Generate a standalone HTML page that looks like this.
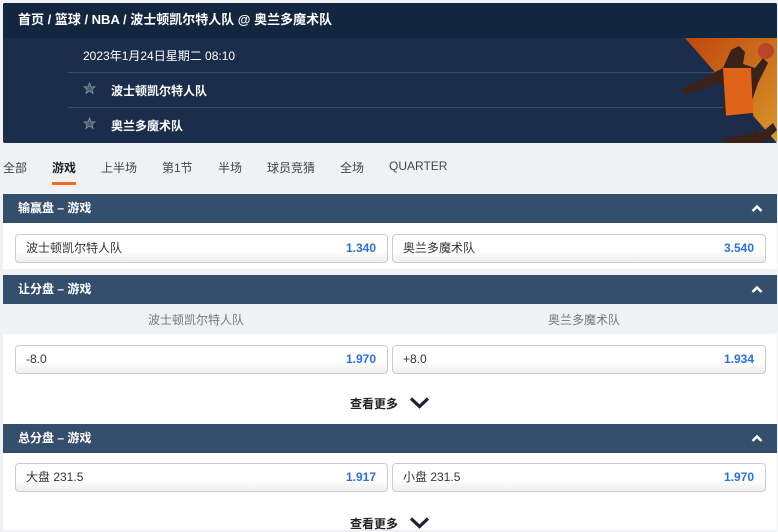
<!DOCTYPE html>
<html><head><meta charset="utf-8"><style>
*{box-sizing:border-box;margin:0;padding:0}
body{width:778px;height:530px;overflow:hidden;background:#eff1f5;font-family:"Liberation Sans","Noto Sans CJK SC",sans-serif;font-size:12px;color:#222;position:relative}
.abs{position:absolute}
.hdr{left:3px;top:3px;width:774px;height:140px;background:#1a2d4a;border-radius:2px;overflow:hidden}
.top{left:0;top:0;width:774px;height:35px;background:#13263f;color:#fff;font-weight:bold;font-size:13px;line-height:33px;padding-left:15px}
.line{height:1px;background:#3a4d68;left:65px;width:709px}
.wt{color:#fff;font-weight:bold;font-size:12px}
.tabs span{position:absolute;top:159px;font-size:12px;color:#444}
.sh{left:3px;width:774px;height:29px;background:#344f6b;color:#fff;font-weight:bold;font-size:12px;line-height:29px;padding-left:15px}
.sh svg{position:absolute;right:14px;top:10px}
.wb{left:3px;width:774px;background:#fff}
.btn{position:absolute;height:29px;border:1px solid #ccc;border-radius:4px;background:linear-gradient(#fff 60%,#eee);line-height:27px;padding:0 10px;font-size:12px;color:#333}
.btn b{position:absolute;right:11px;top:0;color:#2a6fe0;font-weight:bold}
.more{font-weight:bold;font-size:12px;color:#222}
</style></head><body>
<div class="abs hdr">
<div class="abs top">首页 / 篮球 / NBA / 波士顿凯尔特人队 @ 奥兰多魔术队</div>
<div class="abs" style="left:80px;top:44px;color:#fff;font-size:12px">2023年1月24日星期二 08:10</div>
<div class="abs line" style="top:69px"></div>
<div class="abs line" style="top:104px"></div>
<svg class="abs" style="left:80px;top:79px" width="13" height="13" viewBox="0 0 24 24"><path d="M12 2l3 7h7l-5.5 4.5 2 7.5L12 16.5 5.5 21l2-7.5L2 9h7z" fill="#4a5a70" stroke="#8a95a5" stroke-width="1.5"/></svg>
<div class="abs wt" style="left:108px;top:79px">波士顿凯尔特人队</div>
<svg class="abs" style="left:80px;top:114px" width="13" height="13" viewBox="0 0 24 24"><path d="M12 2l3 7h7l-5.5 4.5 2 7.5L12 16.5 5.5 21l2-7.5L2 9h7z" fill="#4a5a70" stroke="#8a95a5" stroke-width="1.5"/></svg>
<div class="abs wt" style="left:108px;top:114px">奥兰多魔术队</div>
<svg class="abs" style="left:620px;top:35px" width="154" height="105">
<defs><linearGradient id="g" x1="0" y1="0" x2="1" y2="1"><stop offset="0" stop-color="#c0460e"/><stop offset="1" stop-color="#d8962a"/></linearGradient></defs>
<polygon points="62,0 154,0 154,105" fill="url(#g)"/>
<path d="M58,52 L100,30 L108,12 L116,8 L122,14 L120,26 L132,30 L140,20 L145,25 L135,45 L130,60 L120,80 L138,95 L150,85 L154,92 L140,105 L100,105 L105,90 L100,70 L105,50 L95,45 L62,57 Z" fill="#3a2218"/>
<path d="M100,30 L128,30 L130,75 L103,78 Z" fill="#e0631a"/>
<path d="M100,78 L130,75 L132,95 L102,100 Z" fill="#1c2c48"/>
<circle cx="143" cy="13" r="8" fill="#b9452a"/>
</svg>
</div>
<div class="tabs">
<span style="left:3px">全部</span>
<span style="left:52px;font-weight:bold;color:#222">游戏</span>
<span style="left:101px">上半场</span>
<span style="left:162px">第1节</span>
<span style="left:218px">半场</span>
<span style="left:267px">球员竞猜</span>
<span style="left:340px">全场</span>
<span style="left:389px">QUARTER</span>
</div>
<div class="abs" style="left:52px;top:182px;width:24px;height:3px;background:#f26a1b"></div>

<div class="abs sh" style="top:194px">输赢盘 – 游戏<svg width="12" height="9" viewBox="0 0 12 9"><path d="M1.5 7L6 2.5 10.5 7" fill="none" stroke="#fff" stroke-width="2.5"/></svg></div>
<div class="abs wb" style="top:223px;height:46px"></div>
<div class="btn" style="left:15px;top:234px;width:373px">波士顿凯尔特人队<b>1.340</b></div>
<div class="btn" style="left:392px;top:234px;width:374px">奥兰多魔术队<b>3.540</b></div>

<div class="abs sh" style="top:275px">让分盘 – 游戏<svg width="12" height="9" viewBox="0 0 12 9"><path d="M1.5 7L6 2.5 10.5 7" fill="none" stroke="#fff" stroke-width="2.5"/></svg></div>
<div class="abs" style="left:148px;top:311px;color:#777">波士顿凯尔特人队</div>
<div class="abs" style="left:548px;top:311px;color:#777">奥兰多魔术队</div>
<div class="abs wb" style="top:334px;height:90px"></div>
<div class="btn" style="left:15px;top:345px;width:373px">-8.0<b>1.970</b></div>
<div class="btn" style="left:392px;top:345px;width:374px">+8.0<b>1.934</b></div>
<div class="abs more" style="left:350px;top:395px">查看更多</div>
<svg class="abs" style="left:409px;top:396px" width="21" height="14" viewBox="0 0 21 14"><path d="M2 2.5L10.5 10.5 19 2.5" fill="none" stroke="#1a2233" stroke-width="3.2"/></svg>

<div class="abs sh" style="top:424px">总分盘 – 游戏<svg width="12" height="9" viewBox="0 0 12 9"><path d="M1.5 7L6 2.5 10.5 7" fill="none" stroke="#fff" stroke-width="2.5"/></svg></div>
<div class="abs wb" style="top:453px;height:77px"></div>
<div class="btn" style="left:15px;top:463px;width:373px">大盘 231.5<b>1.917</b></div>
<div class="btn" style="left:392px;top:463px;width:374px">小盘 231.5<b>1.970</b></div>
<div class="abs more" style="left:350px;top:515px">查看更多</div>
<svg class="abs" style="left:409px;top:516px" width="21" height="14" viewBox="0 0 21 14"><path d="M2 2.5L10.5 10.5 19 2.5" fill="none" stroke="#1a2233" stroke-width="3.2"/></svg>
</body></html>
